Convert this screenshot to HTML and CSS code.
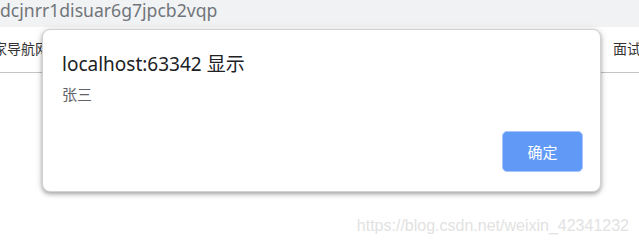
FILE: index.html
```html
<!DOCTYPE html>
<html lang="zh-CN">
<head>
  <meta charset="UTF-8" />
  <title>localhost:63342</title>
  <link rel="stylesheet" href="styles.css">
</head>
<body>
  <div class="addr">dcjnrr1disuar6g7jpcb2vqp</div>

  <div class="nav">
    <span class="nav-left">家导航网</span>
    <span class="nav-right">面试</span>
  </div>

  <div class="watermark">https://blog.csdn.net/weixin_42341232</div>

  <div class="dialog">
    <div class="dialog-title">localhost:63342 显示</div>
    <div class="dialog-msg">张三</div>
    <div class="dialog-actions">
      <button type="button" class="ok">确定</button>
    </div>
  </div>
</body>
</html>
```

FILE: styles.css
```css
body {
  margin: 0;
  font-family: "Noto Sans", "Noto Sans CJK SC", sans-serif;
  background: #fff;
  width: 639px;
  height: 245px;
  overflow: hidden;
  position: relative;
}
.addr {
  height: 27px;
  background: #f1f2f4;
  color: #70757a;
  font-size: 17.6px;
  line-height: 21px;
  white-space: nowrap;
  overflow: hidden;
}
.nav {
  display: flex;
  justify-content: space-between;
  height: 45px;
  border-bottom: 1px solid #c4c4c4;
  font-size: 14px;
  line-height: 44px;
  color: #333;
  white-space: nowrap;
  overflow: hidden;
}
.nav-left {
  margin-left: -7px;
}
.nav-right {
  margin-right: -2px;
}
.watermark {
  text-align: right;
  padding: 144px 10px 0 0;
  font-family: "Liberation Sans", Arial, sans-serif;
  font-size: 16px;
  color: #e2e2e2;
}
.dialog {
  position: absolute;
  left: 42px;
  top: 29px;
  width: 559px;
  height: 163px;
  box-sizing: border-box;
  background: #fff;
  border: 1px solid #d2d2d2;
  border-radius: 8px;
  box-shadow: 0 2px 4px rgba(0, 0, 0, 0.3), 0 1px 8px rgba(0, 0, 0, 0.12);
  padding: 0 17px 0 19px;
  display: flex;
  flex-direction: column;
}
.dialog-title {
  margin-top: 20px;
  font-size: 19px;
  line-height: 28px;
  color: #202124;
}
.dialog-msg {
  margin-top: 6px;
  font-size: 15px;
  line-height: 20px;
  color: #5f6368;
}
.dialog-actions {
  display: flex;
  justify-content: flex-end;
  margin-top: 27px;
}
.ok {
  width: 81px;
  height: 41px;
  background: #6199f7;
  border: 1px solid #a8c6fb;
  border-radius: 5px;
  color: #fff;
  font-family: "Noto Sans CJK SC", sans-serif;
  font-size: 15px;
  padding: 0;
}
```
